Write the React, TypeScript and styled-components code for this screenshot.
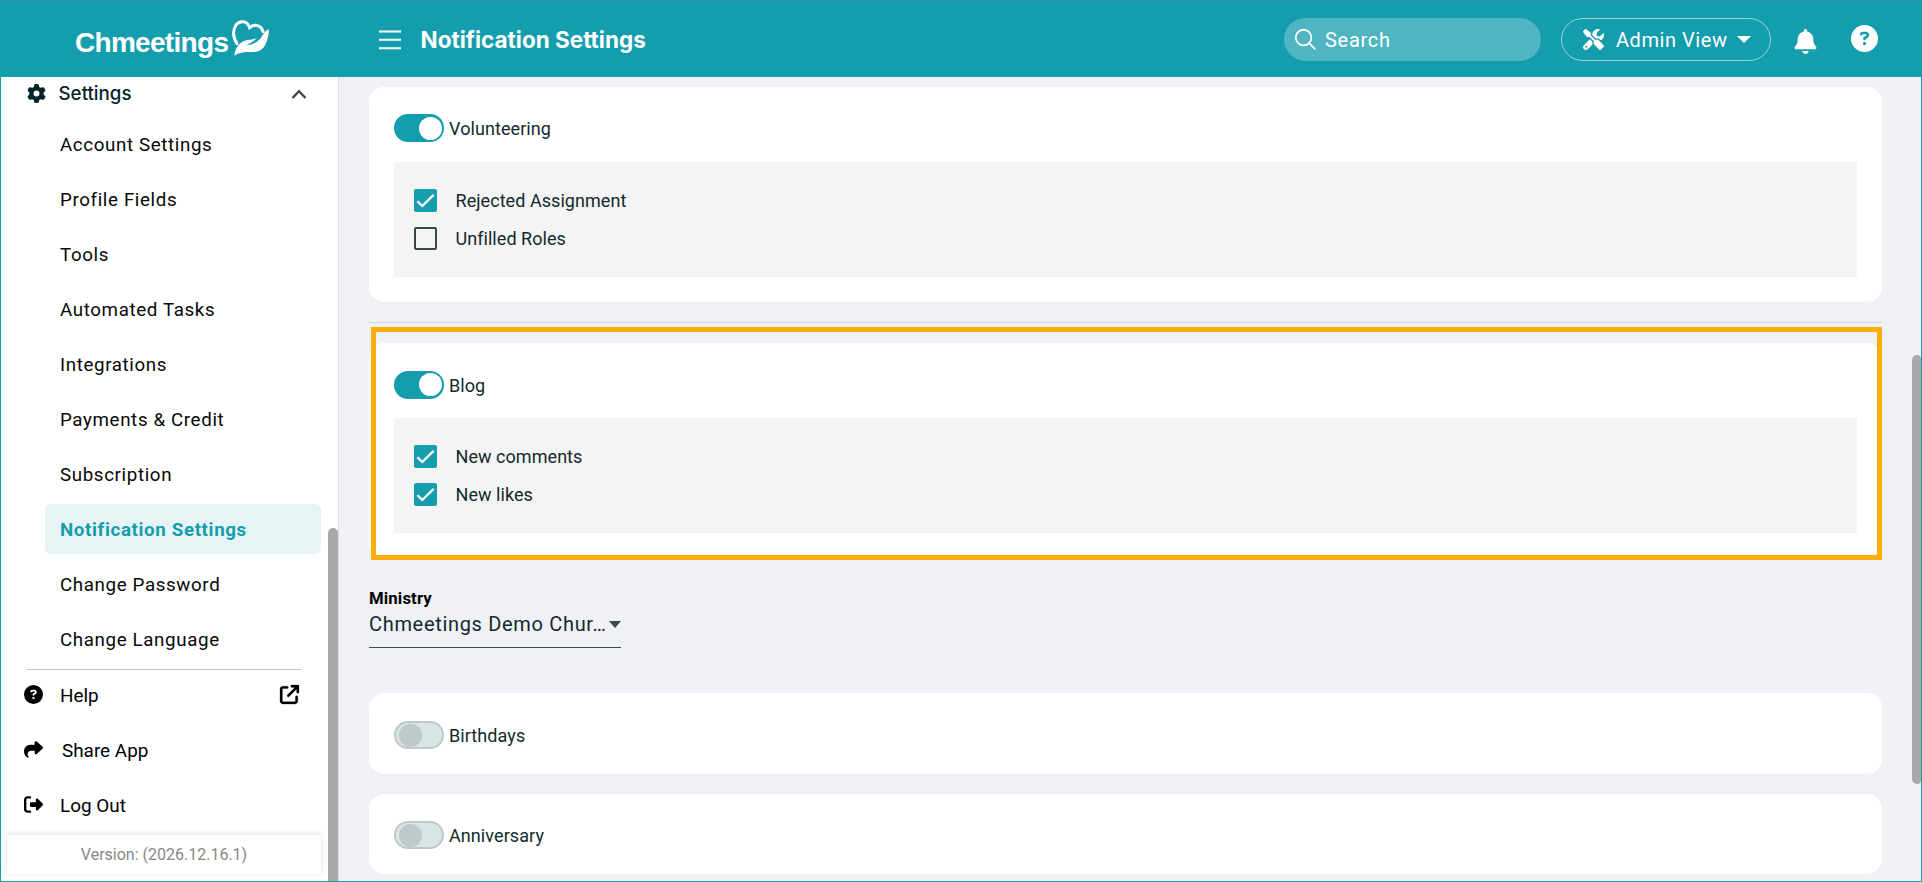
import React from 'react';
import styled, { createGlobalStyle, css } from 'styled-components';
import {
  FaArrowUpRightFromSquare,
  FaBell,
  FaCircleQuestion,
  FaGear,
  FaRightFromBracket,
  FaScrewdriverWrench,
  FaShare,
} from 'react-icons/fa6';

const teal = '#149dac';
const ink = '#12292d';

const GlobalStyle = createGlobalStyle`
  * { box-sizing: border-box; }
  body { margin: 0; font-family: Roboto, sans-serif; }
`;

const Page = styled.div`
  width: 1922px;
  height: 882px;
  display: flex;
  flex-direction: column;
  overflow: hidden;
  border: 1px solid ${teal};
  background: #f0f1f6;
`;

const Header = styled.header`
  height: 76px;
  flex: none;
  display: flex;
  align-items: center;
  padding-right: 43px;
  background: ${teal};
  border-top: 1px solid #3a88b4;
  color: #fff;
`;

const Brand = styled.div`
  width: 378px;
  height: 60px;
  flex: none;
  display: flex;
  align-items: flex-start;
  padding-left: 74px;
`;

const BrandName = styled.span`
  width: 153px;
  font: 700 28px/34px 'Liberation Sans', sans-serif;
  letter-spacing: -0.7px;
  padding-top: 16px;
`;

const BrandMark = styled.svg`
  width: 38px;
  height: 38px;
  margin-top: 9px;
  margin-left: 4px;
`;

const MenuIcon = styled.svg`
  width: 22px;
  height: 20px;
  flex: none;
`;

const Title = styled.h1`
  margin: 0 auto 0 19.5px;
  font: 700 22.5px/30px Inter, sans-serif;
`;

const SearchBox = styled.div`
  width: 257px;
  height: 43px;
  border-radius: 22px;
  padding-left: 11px;
  display: flex;
  align-items: center;
  gap: 9px;
  background: #4fb6c1;
  font-size: 20px;
  letter-spacing: 0.7px;
`;

const AdminButton = styled.div`
  width: 210px;
  height: 43px;
  margin: 0 22px 0 20px;
  padding-left: 21px;
  border: 1px solid rgba(255, 255, 255, 0.55);
  border-radius: 22px;
  display: flex;
  align-items: center;
  font-size: 20px;
  letter-spacing: 0.55px;

  span { margin: 0 10px 0 12px; }
`;

const Caret = styled.i<{ $color: string; $w: number }>`
  flex: none;
  border: ${(p) => p.$w / 2}px solid transparent;
  border-top: 7px solid ${(p) => p.$color};
  border-bottom: 0;
`;

const BellButton = styled.span`
  display: flex;
  margin-top: 4px;
`;

const HelpLink = styled.span`
  display: flex;
  margin: -2px 0 0 33px;
`;

const Body = styled.div`
  flex: 1;
  min-height: 0;
  display: flex;
`;

const Sidebar = styled.aside`
  width: 338px;
  flex: none;
  display: flex;
  background: #fff;
  border-right: 1px solid #d9dbe0;
`;

const SidebarContent = styled.div`
  width: 314px;
  margin-left: 6px;
  display: flex;
  flex-direction: column;
`;

const Menu = styled.nav`
  position: relative;
  height: 753px;
  background: #fff;
  border-radius: 0 0 8px 8px;
`;

const GroupRow = styled.div`
  display: flex;
  align-items: center;
  height: 42px;
  padding: 0 14px 9px 20px;
  font: 500 18.75px/24px Inter, sans-serif;
  color: #02242a;

  span { margin: 0 auto 0 12.5px; }
`;

const SubItem = styled.div<{ $active?: boolean }>`
  height: 50px;
  margin: 0 0 5px 38px;
  padding-left: 15px;
  line-height: 52px;
  font-size: 18.75px;
  letter-spacing: 0.62px;
  color: #080808;
  border-radius: 6px;
  ${(p) =>
    p.$active &&
    css`
      background: #e6f4f5;
      color: ${teal};
      font-weight: 700;
    `}
`;

const Divider = styled.hr`
  margin: 0 20px;
  border: 0;
  height: 1px;
  background: #bac5c6;
`;

const FooterItem = styled.div<{ $gap?: number }>`
  height: 50px;
  margin-bottom: 5px;
  padding: 0 22px 0 17px;
  display: flex;
  align-items: center;
  font-size: 18.9px;
  color: #000;

  span { margin: 0 auto 0 ${(p) => p.$gap ?? 17}px; }
  svg { position: relative; top: -1px; }
`;

const ExternalIcon = styled(FaArrowUpRightFromSquare)`
  stroke: currentColor;
  stroke-width: 8px;
  overflow: visible;
`;

const Version = styled.div`
  height: 39px;
  margin-top: 5px;
  line-height: 39px;
  text-align: center;
  font-size: 16px;
  color: #868686;
  box-shadow: 0 -1px 6px rgba(0, 0, 0, 0.13);
`;

const SidebarThumb = styled.div`
  width: 10px;
  height: 353px;
  margin: 451px 0 0 7px;
  border-radius: 5px 5px 0 0;
  background: #a9a9a9;
`;

const Main = styled.main`
  position: relative;
  flex: 1;
  padding: 10px 0 0 30px;
`;

const Card = styled.section<{ $mb: number }>`
  width: 1513px;
  margin-bottom: ${(p) => p.$mb}px;
  padding: 0 25px;
  border-radius: 15px;
  background: #fff;
`;

const CardHead = styled.div<{ $h: number; $pt: number }>`
  height: ${(p) => p.$h}px;
  padding-top: ${(p) => p.$pt}px;
  display: flex;
  align-items: flex-start;
  gap: 5px;
  font-size: 18px;
  line-height: 29px;
  letter-spacing: 0.08px;
  color: ${ink};
`;

const Switch = styled.div<{ $on?: boolean }>`
  width: 50px;
  height: 28px;
  padding: 0 ${(p) => (p.$on ? 0 : 3)}px;
  display: flex;
  align-items: center;
  justify-content: ${(p) => (p.$on ? 'flex-end' : 'flex-start')};
  border: 2px solid ${(p) => (p.$on ? teal : '#bfc8ca')};
  border-radius: 14px;
  background: ${(p) => (p.$on ? teal : '#d8e5e6')};

  &::after {
    content: '';
    width: 23px;
    height: 23px;
    border-radius: 50%;
    background: ${(p) => (p.$on ? '#fff' : '#bfc8ca')};
  }
`;

const Panel = styled.div`
  height: 115px;
  padding: 20px;
  background: #f4f4f4;
`;

const CheckRow = styled.div`
  height: 37.5px;
  display: flex;
  align-items: center;
  gap: 18.5px;
  font-size: 18px;
  letter-spacing: 0.05px;
  color: ${ink};
`;

const CheckSquare = styled.span<{ $on: boolean }>`
  width: 23px;
  height: 23px;
  display: flex;
  border-radius: 2px;
  border: 2px solid ${(p) => (p.$on ? teal : '#3b484a')};
  background: ${(p) => (p.$on ? teal : 'transparent')};
`;

const SectionRule = styled.hr`
  width: 1513px;
  height: 1px;
  margin: 0 0 20px;
  border: 0;
  background: #d4d7da;
`;

const CardSpacer = styled.div`
  height: 25px;
`;

const Field = styled.div`
  width: 252px;
  height: 60px;
  margin: 30px 0 45px;
  border-bottom: 1px solid #3b4a4c;
`;

const FieldLabel = styled.div`
  font-size: 16.8px;
  line-height: 20px;
  font-weight: 700;
  color: #000;
  letter-spacing: 0.1px;
`;

const FieldValue = styled.div`
  height: 32px;
  display: flex;
  align-items: center;
  justify-content: space-between;
  font-size: 20px;
  letter-spacing: 0.68px;
  white-space: nowrap;
  color: ${ink};
`;

const Highlight = styled.div`
  position: absolute;
  left: 32px;
  top: 250px;
  width: 1511px;
  height: 233px;
  border: 5px solid #fbad08;
`;

const PageThumb = styled.div`
  position: absolute;
  right: 0;
  top: 278px;
  width: 9px;
  height: 429px;
  border-radius: 5px 4px 4px 5px;
  background: #a9a9a9;
`;

const menuItems = [
  'Account Settings',
  'Profile Fields',
  'Tools',
  'Automated Tasks',
  'Integrations',
  'Payments & Credit',
  'Subscription',
  'Notification Settings',
  'Change Password',
  'Change Language',
];

function Check({ label, on = false }: { label: string; on?: boolean }) {
  return (
    <CheckRow>
      <CheckSquare $on={on}>
        {on && (
          <svg width="19" height="19" viewBox="0 0 19 19" fill="none">
            <path d="M1.4 10.2 6.3 15 17.6 3.9" stroke="#fff" strokeWidth="2.3" />
          </svg>
        )}
      </CheckSquare>
      {label}
    </CheckRow>
  );
}

function SettingCard({
  title,
  on,
  mb,
  headHeight = 75,
  headPad = 27,
  children,
}: {
  title: string;
  on?: boolean;
  mb: number;
  headHeight?: number;
  headPad?: number;
  children?: React.ReactNode;
}) {
  return (
    <Card $mb={mb}>
      <CardHead $h={headHeight} $pt={headPad}>
        <Switch $on={on} />
        {title}
      </CardHead>
      {children && (
        <>
          <Panel>{children}</Panel>
          <CardSpacer />
        </>
      )}
    </Card>
  );
}

export default function App() {
  return (
    <>
      <GlobalStyle />
      <Page>
        <Header>
          <Brand>
            <BrandName>Chmeetings</BrandName>
            <BrandMark viewBox="162 22 114 114">
              <path
                d="M177 96C165 76 164 55 174 40C186 24 208 28 215 48C229 35 250 41 255 60"
                fill="none"
                stroke="#fff"
                strokeWidth="9"
                strokeLinecap="round"
              />
              <path
                d="M169 132C171 112 181 94 200 87C212 83 224 86 236 79C228 90 216 94 205 102C222 99 240 92 250 77C256 66 262 57 273 53C272 72 269 88 260 103C249 120 233 122 212 121C196 120 181 124 169 132Z"
                fill="#fff"
              />
            </BrandMark>
          </Brand>
          <MenuIcon viewBox="0 0 22 20">
            <path d="M0 1.5H22M0 9.8H22M0 18.2H22" stroke="#fff" strokeWidth="2.1" />
          </MenuIcon>
          <Title>Notification Settings</Title>
          <SearchBox>
            <svg width="21" height="21" viewBox="0 0 21 21" fill="none" stroke="#fff" strokeWidth="1.7">
              <circle cx="8.6" cy="8.6" r="7.8" />
              <path d="M14.2 14.2 20.3 20.3" />
            </svg>
            Search
          </SearchBox>
          <AdminButton>
            <FaScrewdriverWrench size={21} />
            <span>Admin View</span>
            <Caret $color="#fff" $w={14} />
          </AdminButton>
          <BellButton>
            <FaBell size={25} />
          </BellButton>
          <HelpLink>
            <FaCircleQuestion size={27} />
          </HelpLink>
        </Header>
        <Body>
          <Sidebar>
            <SidebarContent>
              <Menu>
                <GroupRow>
                  <FaGear size={19} />
                  <span>Settings</span>
                  <svg width="16" height="10" viewBox="0 0 16 10" fill="none">
                    <path d="M1.5 9 8 2.2 14.5 9" stroke="#3c4a4d" strokeWidth="2.4" />
                  </svg>
                </GroupRow>
                {menuItems.map((item) => (
                  <SubItem key={item} $active={item === 'Notification Settings'}>
                    {item}
                  </SubItem>
                ))}
                <Divider />
                <FooterItem>
                  <FaCircleQuestion size={19} />
                  <span>Help</span>
                  <ExternalIcon size={19} />
                </FooterItem>
                <FooterItem $gap={19}>
                  <FaShare size={19} />
                  <span>Share App</span>
                </FooterItem>
                <FooterItem>
                  <FaRightFromBracket size={19} />
                  <span>Log Out</span>
                </FooterItem>
              </Menu>
              <Version>Version: (2026.12.16.1)</Version>
            </SidebarContent>
            <SidebarThumb />
          </Sidebar>
          <Main>
            <SettingCard title="Volunteering" on mb={20}>
              <Check label="Rejected Assignment" on />
              <Check label="Unfilled Roles" />
            </SettingCard>
            <SectionRule />
            <SettingCard title="Blog" on mb={0} headPad={27.5}>
              <Check label="New comments" on />
              <Check label="New likes" on />
            </SettingCard>
            <Field>
              <FieldLabel>Ministry</FieldLabel>
              <FieldValue>
                Chmeetings Demo Chur…
                <Caret $color="#3b4a4c" $w={12} />
              </FieldValue>
            </Field>
            <SettingCard title="Birthdays" mb={20} headHeight={81} headPad={28} />
            <SettingCard title="Anniversary" mb={0} headHeight={80} />
            <Highlight />
            <PageThumb />
          </Main>
        </Body>
      </Page>
    </>
  );
}
